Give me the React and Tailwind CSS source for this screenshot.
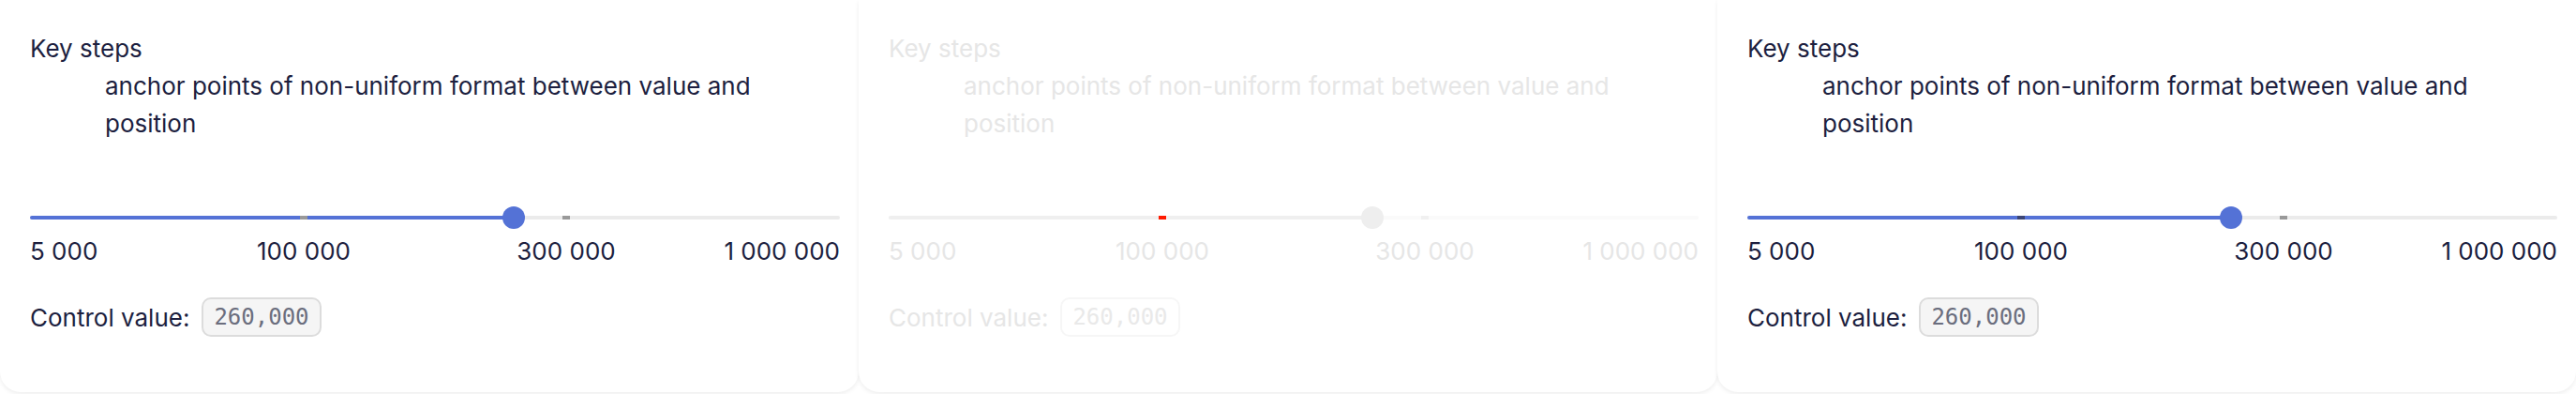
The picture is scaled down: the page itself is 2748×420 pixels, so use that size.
import React from "react";

const marks = [
  { label: "5 000" },
  { label: "100 000" },
  { label: "300 000" },
  { label: "1 000 000" },
];

function Slider({ disabled, firstMark }) {
  const pos = 0.6;
  return (
    <div className="relative h-6 flex items-center">
      <div
        className={
          "relative h-1 w-full rounded-full " +
          (disabled ? "bg-[#fafafa]" : "bg-[#ebebeb]")
        }
      >
        <div
          className={
            "absolute left-0 top-0 h-1 rounded-full " +
            (disabled ? "bg-[#efefef]" : "bg-[#5472d6]")
          }
          style={{ width: `calc(12px + ${pos} * (100% - 24px))` }}
        />
        <div
          className={"absolute top-0 h-1 w-2 -translate-x-1/2 " + firstMark}
          style={{ left: "calc(12px + (100% - 24px) / 3)" }}
        />
        <div
          className={
            "absolute top-0 h-1 w-2 -translate-x-1/2 " +
            (disabled ? "bg-[#f0f0f0]" : "bg-[#999999]")
          }
          style={{ left: "calc(12px + (100% - 24px) * 2 / 3)" }}
        />
      </div>
      <div
        className={
          "absolute top-0 h-6 w-6 -translate-x-1/2 rounded-full " +
          (disabled ? "bg-[#eeeeee]" : "bg-[#5472d6]")
        }
        style={{ left: `calc(12px + ${pos} * (100% - 24px))` }}
      />
    </div>
  );
}

function Panel({ disabled, firstMark }) {
  const text = disabled ? "text-[#e6e6e6]" : "text-[#1d1f3f]";
  return (
    <div className="h-[418px] rounded-b-[22px] bg-white shadow-[0_2px_5px_rgba(0,0,0,0.07)] pt-8 pl-8 pr-5">
      <dl className={"text-[26px] leading-[40px] " + text}>
        <dt>Key steps</dt>
        <dd className="ml-[80px]">
          anchor points of non-uniform format between value and position
        </dd>
      </dl>

      <div className="mt-[68px]">
        <Slider disabled={disabled} firstMark={firstMark} />
      </div>

      <div className={"mt-1 mx-3 grid grid-cols-6 text-[26px] leading-[40px] " + text}>
        <span className="-ml-3 text-left">{marks[0].label}</span>
        <span className="col-span-2 text-center">{marks[1].label}</span>
        <span className="col-span-2 text-center">{marks[2].label}</span>
        <span className="-mr-3 text-right">{marks[3].label}</span>
      </div>

      <div className={"mt-[29px] flex items-center gap-[13px] text-[26px] " + text}>
        <span>Control value:</span>
        <code
          className={
            "h-[42px] flex items-center rounded-[10px] border-2 px-[11px] text-[24px] font-['DejaVu_Sans_Mono',monospace] " +
            (disabled
              ? "border-[#f6f6f6] bg-white text-[#e9e9e9]"
              : "border-[#dcdcdc] bg-[#f5f5f5] text-[#6b6e7e]")
          }
        >
          260,000
        </code>
      </div>
    </div>
  );
}

export default function App() {
  return (
    <div className="w-[2748px] h-[420px] bg-white grid grid-cols-3 font-['Inter',sans-serif]">
      <Panel firstMark="bg-[#999999]" />
      <Panel disabled firstMark="bg-[#ff1a00]" />
      <Panel firstMark="bg-[#3c4676]" />
    </div>
  );
}
